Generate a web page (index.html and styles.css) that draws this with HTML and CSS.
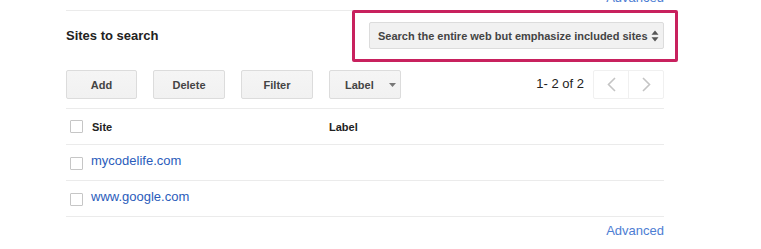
FILE: index.html
```html
<!DOCTYPE html>
<html>
<head>
<meta charset="utf-8">
<link rel="stylesheet" href="styles.css">
</head>
<body>
<div class="page">
  <div class="top-adv"><a class="adv-link top-link">Advanced</a></div>
  <div class="header">
    <div class="title">Sites to search</div>
    <div class="select-wrap">
      <div class="select">
        <span>Search the entire web but emphasize included sites</span>
        <svg class="updown" width="8" height="12" viewBox="0 0 8 12"><path d="M4 0.5 L7.5 4.8 L0.5 4.8 Z M0.5 7.2 L7.5 7.2 L4 11.5 Z" fill="#555"/></svg>
      </div>
      <div class="highlight"></div>
    </div>
  </div>
  <div class="toolbar">
    <div class="btn btn-add">Add</div>
    <div class="btn">Delete</div>
    <div class="btn">Filter</div>
    <div class="btn btn-label">Label <svg class="caret" width="7" height="4" viewBox="0 0 7 4"><path d="M0 0 L7 0 L3.5 4 Z" fill="#777"/></svg></div>
    <div class="spacer"></div>
    <div class="count">1- 2 of 2</div>
    <div class="pager">
      <div class="pg"><svg width="9" height="15" viewBox="0 0 9 15"><path d="M8 1 L1.5 7.5 L8 14" fill="none" stroke="#c4c4c4" stroke-width="1.6"/></svg></div>
      <div class="pg"><svg width="9" height="15" viewBox="0 0 9 15"><path d="M1 1 L7.5 7.5 L1 14" fill="none" stroke="#c4c4c4" stroke-width="1.6"/></svg></div>
    </div>
  </div>
  <div class="table">
    <div class="row head">
      <span class="cb"></span>
      <span class="c-site">Site</span>
      <span class="c-label">Label</span>
    </div>
    <div class="row">
      <span class="cb"></span>
      <a class="c-site link">mycodelife.com</a>
    </div>
    <div class="row">
      <span class="cb"></span>
      <a class="c-site link">www.google.com</a>
    </div>
  </div>
  <div class="bottom-adv"><a class="adv-link">Advanced</a></div>
</div>
</body>
</html>
```

FILE: styles.css
```css
html, body {
  margin: 0;
  padding: 0;
  background: #fff;
}
body {
  font-family: "Liberation Sans", Arial, sans-serif;
  color: #222;
  overflow: hidden;
}
.page {
  margin-left: 66px;
  width: 598px;
}
.top-adv {
  display: flex;
  justify-content: flex-end;
  height: 10px;
  border-bottom: 1px solid #ebebeb;
}
.adv-link {
  color: #4d7dd3;
  font-size: 13px;
  line-height: 16px;
  text-decoration: none;
}
.top-link {
  display: block;
  margin-top: -10px;
}
.header {
  display: flex;
  align-items: center;
  justify-content: space-between;
  padding-top: 11px;
}
.title {
  font-size: 13px;
  font-weight: bold;
  color: #222;
}
.select-wrap {
  position: relative;
}
.select {
  box-sizing: border-box;
  width: 295px;
  height: 27px;
  background: #f1f1f1;
  border: 1px solid #dcdcdc;
  border-radius: 2px;
  display: flex;
  align-items: center;
  justify-content: space-between;
  padding: 0 4px 0 8px;
  font-size: 11px;
  font-weight: bold;
  color: #444;
  white-space: nowrap;
}
.updown {
  display: block;
  flex: none;
}
.highlight {
  position: absolute;
  left: -17px;
  top: -12px;
  width: 326px;
  height: 52px;
  box-sizing: border-box;
  border: 3px solid #c8215e;
  border-radius: 2px;
  pointer-events: none;
}
.toolbar {
  display: flex;
  align-items: center;
  margin-top: 21px;
  padding-bottom: 9px;
  border-bottom: 1px solid #ebebeb;
}
.btn {
  box-sizing: border-box;
  width: 72px;
  height: 29px;
  margin-right: 16px;
  background: linear-gradient(#f5f5f5, #f1f1f1);
  border: 1px solid #dcdcdc;
  border-radius: 2px;
  display: flex;
  align-items: center;
  justify-content: center;
  font-size: 11px;
  font-weight: bold;
  color: #444;
}
.btn-add {
  width: 71px;
  margin-right: 16px;
}
.btn-label {
  justify-content: flex-start;
  padding-left: 15px;
}
.caret {
  margin-left: 15px;
  display: block;
}
.spacer {
  flex: 1;
}
.count {
  font-size: 13px;
  color: #222;
  margin-right: 9px;
  padding-bottom: 3px;
}
.pager {
  display: flex;
  height: 29px;
  box-sizing: border-box;
  border: 1px solid #f0f0f0;
  border-radius: 2px;
}
.pg {
  width: 34px;
  display: flex;
  align-items: center;
  justify-content: center;
}
.pg + .pg {
  border-left: 1px solid #f0f0f0;
}
.row {
  display: flex;
  align-items: center;
  height: 35px;
  border-bottom: 1px solid #ebebeb;
}
.cb {
  box-sizing: border-box;
  width: 13px;
  height: 13px;
  border: 1px solid #c6c6c6;
  border-radius: 1px;
  margin-left: 4px;
  background: #fff;
}
.head .cb {
  margin-top: -1px;
}
.c-site {
  margin-left: 9px;
  width: 237px;
}
.head .c-site, .c-label {
  font-size: 11px;
  font-weight: bold;
  color: #222;
}
.link {
  font-size: 13px;
  color: #2a5cbb;
  text-decoration: none;
  margin-left: 8px;
  margin-top: -5px;
}
.row:not(.head) .cb {
  margin-top: 1px;
}
.bottom-adv {
  text-align: right;
  margin-top: 4px;
}
```
